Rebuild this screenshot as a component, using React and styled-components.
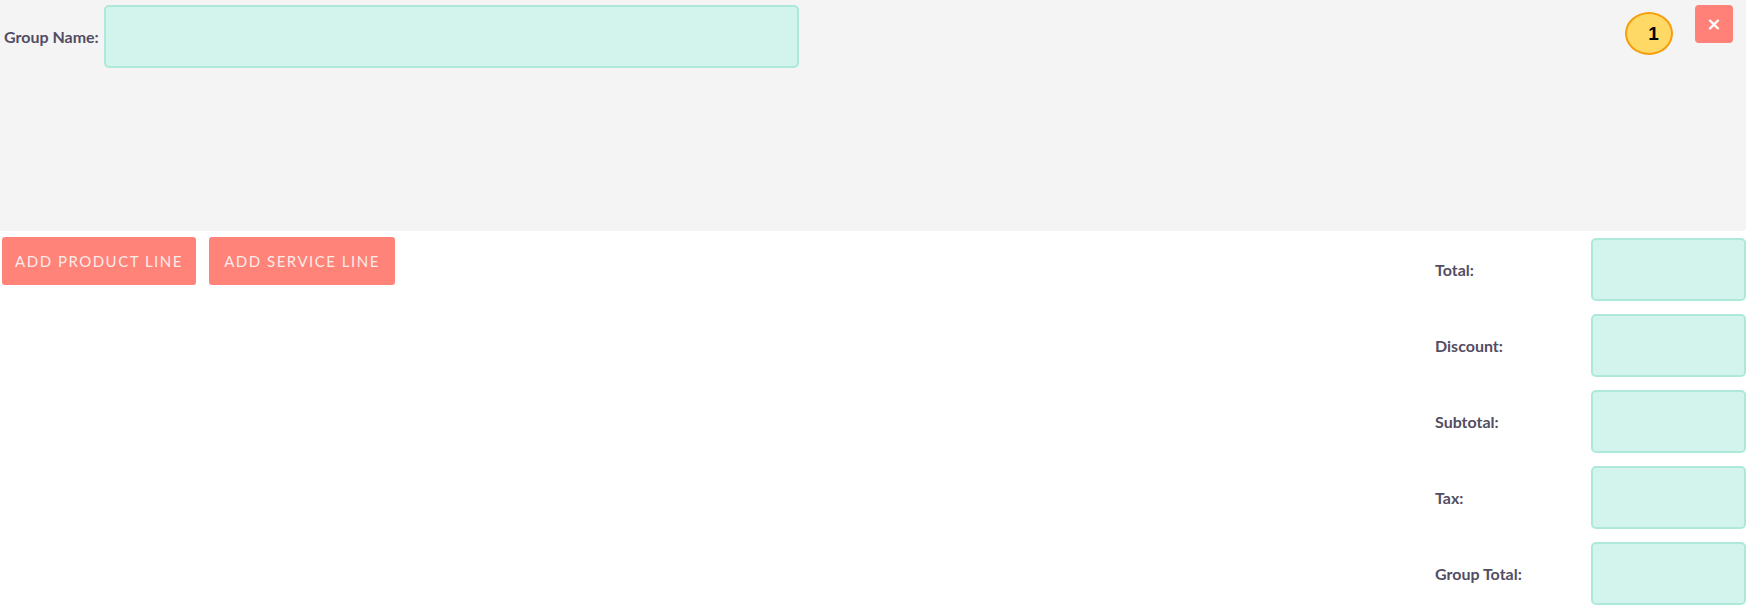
import React from "react";
import styled, { createGlobalStyle } from "styled-components";

const Global = createGlobalStyle`
  html, body { margin: 0; padding: 0; background: #ffffff; }
  body { font-family: Lato, "Open Sans", sans-serif; }
  * { box-sizing: border-box; }
`;

const Page = styled.div`
  width: 1746px;
`;

const GroupPanel = styled.div`
  background: #f4f4f4;
  height: 231px;
  border-radius: 0 0 4px 0;
  padding: 5px 13px 0 4px;
`;

const HeaderRow = styled.div`
  display: flex;
  align-items: flex-start;
`;

const FieldLabel = styled.label`
  font-family: Lato, sans-serif;
  font-weight: 700;
  font-size: 16px;
  color: #534d64;
  height: 63px;
  line-height: 63px;
  width: 100px;
  flex: none;
`;

const TealInput = styled.div`
  background: #d3f4ec;
  border: 2px solid #ade9da;
  border-radius: 5px;
  width: ${(p) => p.$w}px;
  height: 63px;
  flex: none;
`;

const Spacer = styled.div`
  flex: 1;
`;

const Badge = styled.div`
  margin-top: 7px;
  width: 48px;
  height: 43px;
  border-radius: 50%;
  background: #ffd966;
  border: 2px solid #f59d0a;
  display: flex;
  align-items: center;
  justify-content: center;
  padding-left: 9px;
  font-family: "Liberation Sans", Arial, sans-serif;
  font-weight: 700;
  font-size: 19px;
  color: #000;
`;

const CloseButton = styled.button`
  margin-left: 22px;
  width: 38px;
  height: 38px;
  border: none;
  border-radius: 4px;
  background: #ff8178;
  color: #ffffff;
  font-family: "DejaVu Sans", sans-serif;
  font-weight: 700;
  font-size: 18px;
  line-height: 1;
  padding: 0;
  display: flex;
  align-items: center;
  justify-content: center;
`;

const Bottom = styled.div`
  display: flex;
  justify-content: space-between;
  align-items: flex-start;
  padding-top: 6px;
`;

const ButtonRow = styled.div`
  display: flex;
  gap: 13px;
  padding-left: 2px;
`;

const ActionButton = styled.button`
  height: 48px;
  width: ${(p) => p.$w}px;
  border: none;
  border-radius: 3px;
  background: #ff8378;
  color: #fbecea;
  font-family: Lato, sans-serif;
  font-size: 15px;
  letter-spacing: 1.5px;
  text-transform: uppercase;
  padding: 0;
`;

const Totals = styled.div`
  display: grid;
  grid-template-columns: 156px 155px;
  row-gap: 13px;
  margin-top: 1px;
`;

const TotalLabel = styled.div`
  font-family: Lato, sans-serif;
  font-weight: 700;
  font-size: 16px;
  color: #534d64;
  display: flex;
  align-items: center;
  height: 63px;
`;

const rows = ["Total:", "Discount:", "Subtotal:", "Tax:", "Group Total:"];

export default function App() {
  return (
    <Page>
      <Global />
      <GroupPanel>
        <HeaderRow>
          <FieldLabel>Group Name:</FieldLabel>
          <TealInput $w={695} />
          <Spacer />
          <Badge>1</Badge>
          <CloseButton>×</CloseButton>
        </HeaderRow>
      </GroupPanel>
      <Bottom>
        <ButtonRow>
          <ActionButton $w={194}>Add Product Line</ActionButton>
          <ActionButton $w={186}>Add Service Line</ActionButton>
        </ButtonRow>
        <Totals>
          {rows.map((r) => (
            <React.Fragment key={r}>
              <TotalLabel>{r}</TotalLabel>
              <TealInput $w={155} />
            </React.Fragment>
          ))}
        </Totals>
      </Bottom>
    </Page>
  );
}
